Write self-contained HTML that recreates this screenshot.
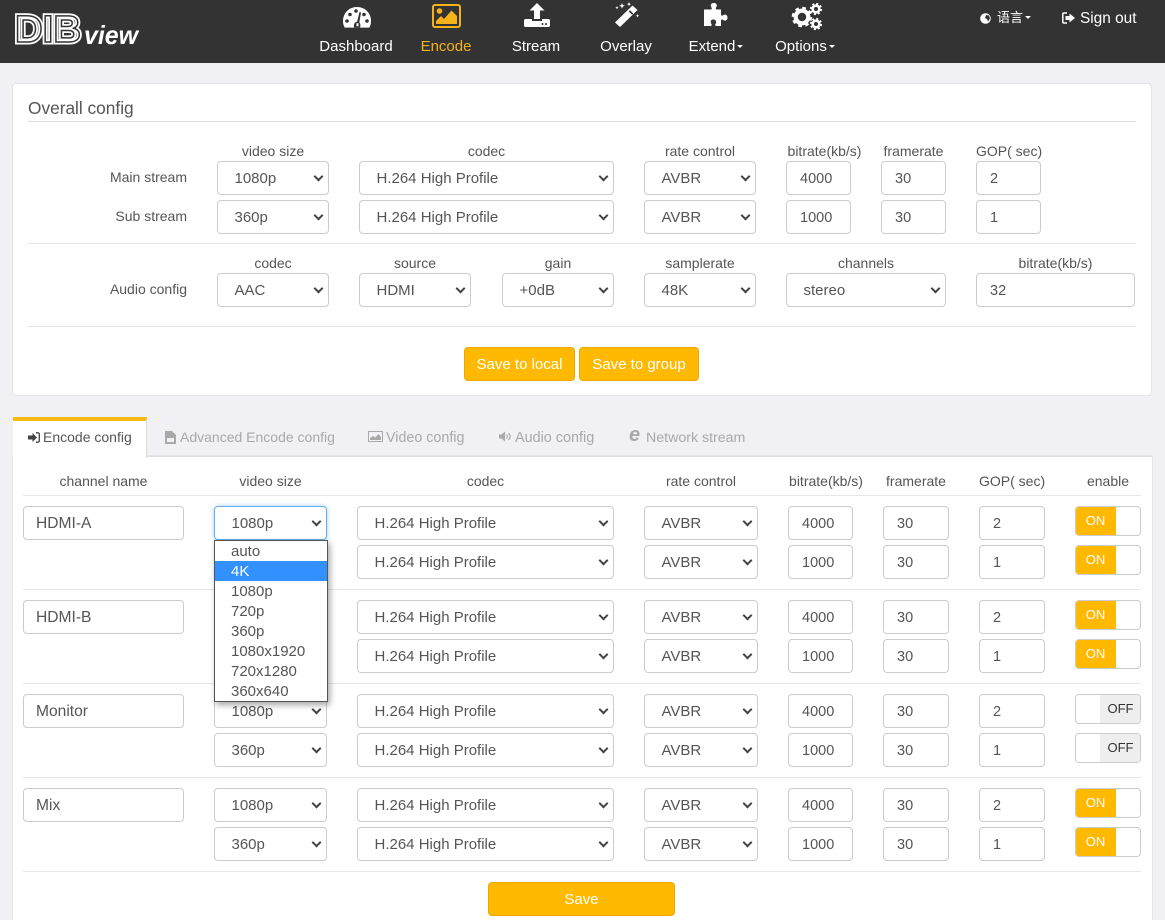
<!DOCTYPE html>
<html lang="en"><head><meta charset="utf-8"><title>DIBview Encode</title>
<style>
html,body{margin:0;padding:0}
body{width:1165px;height:919px;overflow:hidden;position:relative;background:#f0f0f5;font-family:"Liberation Sans","Noto Sans CJK SC",sans-serif;color:#555}
#hd{position:absolute;left:0;top:0;width:1165px;height:63px;background:#333}
.n{position:absolute;top:37px;width:110px;text-align:center;color:#fff;font-size:15px;line-height:20px}
.y{color:#f5b31a}
.c:after{content:"";display:inline-block;margin-left:2px;vertical-align:3px;border-top:3.500px solid #fff;border-left:3.500px solid transparent;border-right:3.500px solid transparent}
svg{position:absolute;overflow:visible}
.p{position:absolute;background:#fff}
.hr{position:absolute;height:1px;background:#e7e7e7}
.l{position:absolute;font-size:14px;line-height:18px;color:#555;text-align:center;white-space:nowrap}
.s,.i{position:absolute;box-sizing:border-box;height:34px;background:#fff;border:1px solid #ccc;border-radius:4px;font-size:15px;line-height:34px;color:#555;white-space:nowrap}
.s{padding-left:16.500px}
.i{padding-left:13px;font-size:14.500px}
.w{font-size:15.600px;padding-left:12px}
.s:after{content:"";position:absolute;right:6px;top:11px;width:5px;height:5px;border-right:2px solid #444;border-bottom:2px solid #444;transform:rotate(45deg)}
.b{position:absolute;box-sizing:border-box;height:34px;background:#ffb900;border:1px solid #eda800;border-radius:4px;color:#fff;font-size:15px;line-height:34px;text-align:center}
.t{position:absolute;top:428px;font-size:14px;line-height:18px;color:#a9a9a9;white-space:nowrap}
.sw{position:absolute;left:1075px;width:66px;height:30px;box-sizing:border-box;border:1px solid #ccc;border-radius:4px;background:#fff;overflow:hidden;font-size:13px;line-height:30px;text-align:center}
.on span{position:absolute;left:-1px;top:-1px;width:41px;height:30px;background:#ffb900;color:#fff}
.of span{position:absolute;left:24px;top:-1px;width:41px;height:30px;background:#eee;color:#333}
#dd{position:absolute;left:214px;top:540px;width:114px;height:162px;box-sizing:border-box;background:#fff;border:1px solid #555;box-shadow:2px 3px 6px rgba(0,0,0,.35);font-size:15px;color:#555}
#dd div{height:20px;line-height:21px;padding-left:16px}
#dd .h{background:#3390ff;color:#fff}
</style></head><body>
<div id="hd">
<svg style="left:0;top:0" width="150" height="60">
<g font-family="'Liberation Sans',sans-serif" font-weight="700" font-size="38">
<text x="15" y="42" textLength="66" lengthAdjust="spacingAndGlyphs" stroke="#fff" stroke-width="5" fill="#333">DIB</text>
<text x="15" y="42" textLength="66" lengthAdjust="spacingAndGlyphs" stroke="#333" stroke-width="1.500" fill="none">DIB</text>
</g>
<text x="84" y="44" textLength="54" lengthAdjust="spacingAndGlyphs" font-family="'Liberation Sans',sans-serif" font-style="italic" font-weight="700" font-size="26" fill="#fff">view</text>
</svg>
<!-- gauge -->
<svg style="left:343px;top:7px" width="28" height="21" viewBox="0 0 28 21"><path fill="#fff" d="M14 0C6 0 0 6 0 14c0 2.600.6 4.800 1.700 6.600h24.600C27.400 18.800 28 16.600 28 14 28 6 22 0 14 0z"/><g fill="#333"><circle cx="4" cy="14" r="1.800"/><circle cx="7" cy="7.500" r="1.800"/><circle cx="13" cy="4" r="1.800"/><circle cx="21" cy="7.500" r="1.800"/><circle cx="24" cy="14" r="1.800"/><path d="M16.500 5l1.500.5-1.700 10c1 .8 1.400 2.500.8 5.100h-6c-.7-3 .5-5.600 3-6z"/></g><path fill="#fff" d="M13.500 16.200h2v3h-2z"/></svg>
<!-- picture -->
<svg style="left:432px;top:4px" width="29" height="24" viewBox="0 0 29 24"><rect x="1" y="1" width="27" height="22" rx="2" fill="none" stroke="#f5b31a" stroke-width="2"/><circle cx="7.500" cy="7" r="2.800" fill="#f5b31a"/><path fill="#f5b31a" d="M4 20v-3l5-5 3 3 7.500-8.500L25 12v8z"/></svg>
<!-- upload -->
<svg style="left:524px;top:3px" width="26" height="24" viewBox="0 0 26 24"><path fill="#fff" d="M13 0l7.500 7.500H16v8.500h-6V7.500H5.500z"/><path fill="#fff" d="M1.500 16H8v2h10v-2h6.500c.8 0 1.500.7 1.500 1.500v5c0 .8-.7 1.500-1.500 1.500h-23C.7 24 0 23.300 0 22.500v-5C0 16.700.7 16 1.500 16z"/><circle cx="18.500" cy="21" r="1" fill="#333"/><circle cx="22" cy="21" r="1" fill="#333"/></svg>
<!-- wand -->
<svg style="left:614px;top:2px" width="26" height="25" viewBox="0 0 26 25"><path fill="#fff" d="M18.500 3.500l5 4.500L6 25l-5-4.500z"/><path fill="#333" d="M14.700 9.500l1.200-1.200 3.300 3.200-1.100 1.200z"/><path fill="#fff" d="M8 1l.8 2 2 .8-2 .8L8 6.600l-.8-2-2-.8 2-.8zM15 0l.6 1.500 1.500.6-1.500.6L15 4.200l-.6-1.500-1.500-.6 1.500-.6zM3 4l.5 1.200 1.200.5-1.200.5L3 7.400l-.5-1.200-1.200-.5 1.200-.5zM23.500 12l.5 1.300 1.300.5-1.300.5-.5 1.300-.5-1.300-1.300-.5 1.300-.5z"/></svg>
<!-- puzzle -->
<svg style="left:704px;top:3px" width="26" height="23" viewBox="0 0 26 23"><path fill="#fff" d="M0 6.500h6.500C7.500 6.500 8 6 7.800 5 7.200 4 6.800 3.500 6.800 2.500 6.800 1 8 0 9.800 0s3 1 3 2.500c0 1-.4 1.500-1 2.500-.2 1 .3 1.500 1.300 1.500H17v4.800c0 1 .5 1.500 1.500 1.300 1-.6 1.500-1 2.500-1 1.500 0 2.500 1.200 2.500 3s-1 3-2.500 3c-1 0-1.500-.4-2.500-1-1-.2-1.500.3-1.500 1.300V23h-4.500c-1 0-1.500-.5-1.300-1.500.6-1 1-1.500 1-2.500 0-1.500-1.200-2.500-3-2.500S6.700 17.500 6.700 19c0 1 .4 1.500 1 2.500.2 1-.3 1.500-1.300 1.500H0z"/></svg>
<!-- cogs -->
<svg style="left:792px;top:3px" width="30" height="27" viewBox="0 0 30 27">
<circle cx="10" cy="14" r="6.300" fill="none" stroke="#fff" stroke-width="4.200"/>
<circle cx="10" cy="14" r="9" fill="none" stroke="#fff" stroke-width="2.600" stroke-dasharray="3.600 3.470"/>
<circle cx="24" cy="6" r="3.300" fill="none" stroke="#fff" stroke-width="2.600"/>
<circle cx="24" cy="6" r="5.200" fill="none" stroke="#fff" stroke-width="1.800" stroke-dasharray="2.100 1.990"/>
<circle cx="24" cy="21" r="3.300" fill="none" stroke="#fff" stroke-width="2.600"/>
<circle cx="24" cy="21" r="5.200" fill="none" stroke="#fff" stroke-width="1.800" stroke-dasharray="2.100 1.990"/>
</svg>
<div class="n" style="left:301px">Dashboard</div>
<div class="n y" style="left:391px">Encode</div>
<div class="n" style="left:481px">Stream</div>
<div class="n" style="left:571px">Overlay</div>
<div class="n c" style="left:661px">Extend</div>
<div class="n c" style="left:750px">Options</div>
<svg style="left:980px;top:13px" width="11" height="11" viewBox="0 0 11 11"><circle cx="5.500" cy="5.500" r="5.300" fill="#fff"/><path fill="#333" d="M6 2l3 .5 1 3-2 3-1-2.500-2-1z"/></svg>
<div class="n c" style="left:997px;top:8px;width:40px;text-align:left;font-size:13px;white-space:nowrap">语言</div>
<svg style="left:1062px;top:12px" width="13" height="12" viewBox="0 0 13 12"><path fill="none" stroke="#fff" stroke-width="1.500" d="M5 1H2C1.200 1 .8 1.500.8 2.200v7.600c0 .7.400 1.200 1.200 1.200h3"/><path fill="#fff" d="M7.500 1.500L13 6l-5.500 4.500V8H3.500V4h4z"/></svg>
<div class="n" style="left:1080px;top:9px;width:60px;text-align:left;font-size:15.400px;white-space:nowrap">Sign out</div>
</div>

<div class="p" style="left:12px;top:83px;width:1140px;height:313px;box-sizing:border-box;border:1px solid #e3e3e8;border-radius:4px"></div>
<div class="l" style="left:28px;top:97px;font-size:17.300px;line-height:22px">Overall config</div>
<div class="hr" style="left:28px;top:121px;width:1108px;background:#ddd"></div>
<div class="l" style="left:217px;top:142px;width:112px">video size</div>
<div class="l" style="left:359px;top:142px;width:255px">codec</div>
<div class="l" style="left:644px;top:142px;width:112px">rate control</div>
<div class="l" style="left:786px;top:142px;width:77px">bitrate(kb/s)</div>
<div class="l" style="left:881px;top:142px;width:65px">framerate</div>
<div class="l" style="left:976px;top:142px;width:65px">GOP( sec)</div>
<div class="l" style="left:60px;top:168px;width:127px;text-align:right">Main stream</div>
<div class="s" style="left:217px;top:161px;width:112px">1080p</div>
<div class="s" style="left:359px;top:161px;width:255px">H.264 High Profile</div>
<div class="s" style="left:644px;top:161px;width:112px">AVBR</div>
<div class="i" style="left:786px;top:161px;width:65px">4000</div>
<div class="i" style="left:881px;top:161px;width:65px">30</div>
<div class="i" style="left:976px;top:161px;width:65px">2</div>
<div class="l" style="left:60px;top:207px;width:127px;text-align:right">Sub stream</div>
<div class="s" style="left:217px;top:200px;width:112px">360p</div>
<div class="s" style="left:359px;top:200px;width:255px">H.264 High Profile</div>
<div class="s" style="left:644px;top:200px;width:112px">AVBR</div>
<div class="i" style="left:786px;top:200px;width:65px">1000</div>
<div class="i" style="left:881px;top:200px;width:65px">30</div>
<div class="i" style="left:976px;top:200px;width:65px">1</div>
<div class="hr" style="left:28px;top:243px;width:1108px"></div>
<div class="l" style="left:217px;top:254px;width:112px">codec</div>
<div class="l" style="left:359px;top:254px;width:112px">source</div>
<div class="l" style="left:502px;top:254px;width:112px">gain</div>
<div class="l" style="left:644px;top:254px;width:112px">samplerate</div>
<div class="l" style="left:786px;top:254px;width:160px">channels</div>
<div class="l" style="left:976px;top:254px;width:159px">bitrate(kb/s)</div>
<div class="l" style="left:60px;top:280px;width:127px;text-align:right">Audio config</div>
<div class="s" style="left:217px;top:273px;width:112px">AAC</div>
<div class="s" style="left:359px;top:273px;width:112px">HDMI</div>
<div class="s" style="left:502px;top:273px;width:112px">+0dB</div>
<div class="s" style="left:644px;top:273px;width:112px">48K</div>
<div class="s" style="left:786px;top:273px;width:160px">stereo</div>
<div class="i" style="left:976px;top:273px;width:159px">32</div>
<div class="hr" style="left:28px;top:326px;width:1108px"></div>
<div class="b" style="left:464px;top:347px;width:111px">Save to local</div>
<div class="b" style="left:579px;top:347px;width:120px">Save to group</div>

<div class="p" style="left:13px;top:456px;width:1139px;height:463px;border-top:1px solid #ddd;box-shadow:0 0 1px rgba(0,0,0,.25)"></div>
<div class="p" style="left:13px;top:417px;width:134px;height:41px;box-sizing:border-box;border-top:4px solid #f5b90f;border-right:1px solid #ddd"></div>
<svg style="left:28px;top:432px" width="12" height="11" viewBox="0 0 12 11"><path fill="#444" d="M4.500 1L9 5.500 4.500 10V7.500H0v-4h4.500z"/><path fill="none" stroke="#444" stroke-width="1.300" d="M8 .8h2c.7 0 1.300.6 1.300 1.300v6.800c0 .7-.6 1.300-1.300 1.300H8"/></svg>
<div class="t" style="left:43px;color:#555">Encode config</div>
<svg style="left:165px;top:431px" width="11" height="13" viewBox="0 0 11 13"><path fill="#a9a9a9" d="M0 0h7l4 4v9H0zM2 7v4h7V7z"/></svg>
<div class="t" style="left:180px">Advanced Encode config</div>
<svg style="left:368px;top:431px" width="15" height="11" viewBox="0 0 15 11"><rect x=".5" y=".5" width="14" height="10" fill="none" stroke="#a9a9a9"/><path fill="#a9a9a9" d="M2 9V7l3-2 2 1.500L10.500 3 13 6v3z"/></svg>
<div class="t" style="left:386px;top:429px;font-size:14.300px">Video config</div>
<svg style="left:499px;top:431px" width="13" height="11" viewBox="0 0 13 11"><path fill="#a9a9a9" d="M0 3.500h2.500L6 .5v10L2.500 7.500H0z"/><path fill="none" stroke="#a9a9a9" stroke-width="1.200" d="M7.500 3.500c1 1 1 3 0 4M9.500 2c2 2 2 5 0 7"/></svg>
<div class="t" style="left:515px;top:429px;font-size:14.400px">Audio config</div>
<div class="t" style="left:629px;font-weight:700;font-style:italic;font-size:20px;top:426px">e</div>
<div class="t" style="left:646px;top:429px;font-size:14.200px">Network stream</div>

<div class="l" style="left:23px;top:472px;width:161px">channel name</div>
<div class="l" style="left:214px;top:472px;width:113px">video size</div>
<div class="l" style="left:357px;top:472px;width:257px">codec</div>
<div class="l" style="left:644px;top:472px;width:114px">rate control</div>
<div class="l" style="left:788px;top:472px;width:76px">bitrate(kb/s)</div>
<div class="l" style="left:883px;top:472px;width:66px">framerate</div>
<div class="l" style="left:979px;top:472px;width:66px">GOP( sec)</div>
<div class="l" style="left:1075px;top:472px;width:66px">enable</div>
<div class="hr" style="left:23px;top:495px;width:1118px"></div>

<div class="i w" style="left:23px;top:506px;width:161px">HDMI-A</div>
<div class="s" style="left:214px;top:506px;width:113px;border-color:#66afe9;box-shadow:0 0 5px rgba(102,175,233,.6)">1080p</div>
<div class="s" style="left:357px;top:506px;width:257px">H.264 High Profile</div>
<div class="s" style="left:644px;top:506px;width:114px">AVBR</div>
<div class="i" style="left:788px;top:506px;width:65px">4000</div>
<div class="i" style="left:883px;top:506px;width:66px">30</div>
<div class="i" style="left:979px;top:506px;width:66px">2</div>
<div class="sw on" style="top:506px"><span>ON</span></div>
<div class="s" style="left:214px;top:545px;width:113px">360p</div>
<div class="s" style="left:357px;top:545px;width:257px">H.264 High Profile</div>
<div class="s" style="left:644px;top:545px;width:114px">AVBR</div>
<div class="i" style="left:788px;top:545px;width:65px">1000</div>
<div class="i" style="left:883px;top:545px;width:66px">30</div>
<div class="i" style="left:979px;top:545px;width:66px">1</div>
<div class="sw on" style="top:545px"><span>ON</span></div>
<div class="hr" style="left:23px;top:589px;width:1118px"></div>

<div class="i w" style="left:23px;top:600px;width:161px">HDMI-B</div>
<div class="s" style="left:214px;top:600px;width:113px">1080p</div>
<div class="s" style="left:357px;top:600px;width:257px">H.264 High Profile</div>
<div class="s" style="left:644px;top:600px;width:114px">AVBR</div>
<div class="i" style="left:788px;top:600px;width:65px">4000</div>
<div class="i" style="left:883px;top:600px;width:66px">30</div>
<div class="i" style="left:979px;top:600px;width:66px">2</div>
<div class="sw on" style="top:600px"><span>ON</span></div>
<div class="s" style="left:214px;top:639px;width:113px">360p</div>
<div class="s" style="left:357px;top:639px;width:257px">H.264 High Profile</div>
<div class="s" style="left:644px;top:639px;width:114px">AVBR</div>
<div class="i" style="left:788px;top:639px;width:65px">1000</div>
<div class="i" style="left:883px;top:639px;width:66px">30</div>
<div class="i" style="left:979px;top:639px;width:66px">1</div>
<div class="sw on" style="top:639px"><span>ON</span></div>
<div class="hr" style="left:23px;top:683px;width:1118px"></div>

<div class="i w" style="left:23px;top:694px;width:161px">Monitor</div>
<div class="s" style="left:214px;top:694px;width:113px">1080p</div>
<div class="s" style="left:357px;top:694px;width:257px">H.264 High Profile</div>
<div class="s" style="left:644px;top:694px;width:114px">AVBR</div>
<div class="i" style="left:788px;top:694px;width:65px">4000</div>
<div class="i" style="left:883px;top:694px;width:66px">30</div>
<div class="i" style="left:979px;top:694px;width:66px">2</div>
<div class="sw of" style="top:694px"><span>OFF</span></div>
<div class="s" style="left:214px;top:733px;width:113px">360p</div>
<div class="s" style="left:357px;top:733px;width:257px">H.264 High Profile</div>
<div class="s" style="left:644px;top:733px;width:114px">AVBR</div>
<div class="i" style="left:788px;top:733px;width:65px">1000</div>
<div class="i" style="left:883px;top:733px;width:66px">30</div>
<div class="i" style="left:979px;top:733px;width:66px">1</div>
<div class="sw of" style="top:733px"><span>OFF</span></div>
<div class="hr" style="left:23px;top:777px;width:1118px"></div>

<div class="i w" style="left:23px;top:788px;width:161px">Mix</div>
<div class="s" style="left:214px;top:788px;width:113px">1080p</div>
<div class="s" style="left:357px;top:788px;width:257px">H.264 High Profile</div>
<div class="s" style="left:644px;top:788px;width:114px">AVBR</div>
<div class="i" style="left:788px;top:788px;width:65px">4000</div>
<div class="i" style="left:883px;top:788px;width:66px">30</div>
<div class="i" style="left:979px;top:788px;width:66px">2</div>
<div class="sw on" style="top:788px"><span>ON</span></div>
<div class="s" style="left:214px;top:827px;width:113px">360p</div>
<div class="s" style="left:357px;top:827px;width:257px">H.264 High Profile</div>
<div class="s" style="left:644px;top:827px;width:114px">AVBR</div>
<div class="i" style="left:788px;top:827px;width:65px">1000</div>
<div class="i" style="left:883px;top:827px;width:66px">30</div>
<div class="i" style="left:979px;top:827px;width:66px">1</div>
<div class="sw on" style="top:827px"><span>ON</span></div>
<div class="hr" style="left:23px;top:871px;width:1118px"></div>
<div class="b" style="left:488px;top:882px;width:187px">Save</div>

<div id="dd"><div>auto</div><div class="h">4K</div><div>1080p</div><div>720p</div><div>360p</div><div>1080x1920</div><div>720x1280</div><div>360x640</div></div>
</body></html>
